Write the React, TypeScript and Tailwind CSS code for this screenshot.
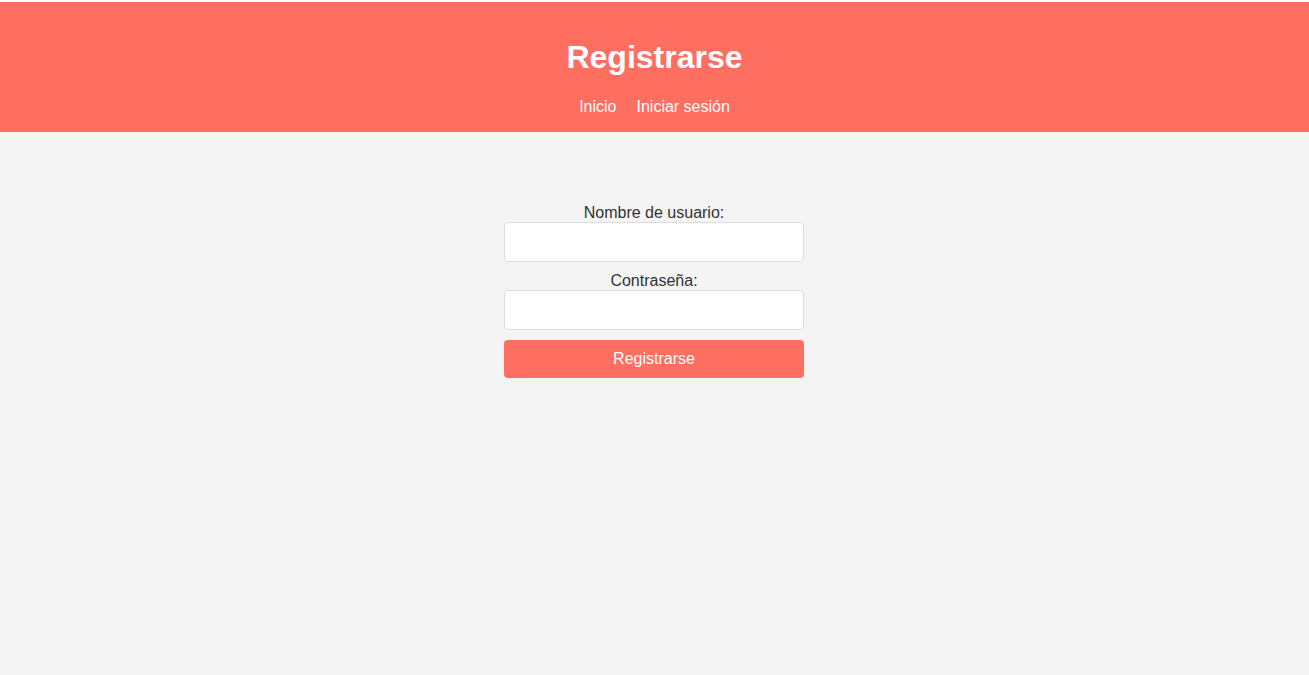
export default function App() {
  return (
    <div className="h-[675px] bg-[#f4f4f4] font-['Liberation_Sans',Arial,sans-serif] text-[#333]">
      <div className="h-[2px] bg-white" />
      <header className="h-[130px] bg-[#ff6f61] text-white flex flex-col items-center">
        <h1 className="mt-[37px] text-[32px] leading-[37px] font-bold">Registrarse</h1>
        <nav className="mt-[22px] flex gap-[20px] text-[16px] leading-[18px]">
          <a href="#">Inicio</a>
          <a href="#">Iniciar sesión</a>
        </nav>
      </header>

      <div className="flex justify-center pr-px">
        <form className="mt-[71px] w-[300px] flex flex-col items-center text-[16px]">
          <label htmlFor="username" className="pt-px leading-[18px] h-[19px]">
            Nombre de usuario:
          </label>
          <input
            id="username"
            type="text"
            className="w-full h-[40px] bg-white border border-[#ddd] rounded-[4px]"
          />
          <label htmlFor="password" className="mt-[9px] pt-px leading-[18px] h-[19px]">
            Contraseña:
          </label>
          <input
            id="password"
            type="password"
            className="w-full h-[40px] bg-white border border-[#ddd] rounded-[4px]"
          />
          <button
            type="submit"
            className="mt-[10px] w-full h-[38px] bg-[#ff6f61] text-white rounded-[4px] text-[16px]"
          >
            Registrarse
          </button>
        </form>
      </div>
    </div>
  )
}
